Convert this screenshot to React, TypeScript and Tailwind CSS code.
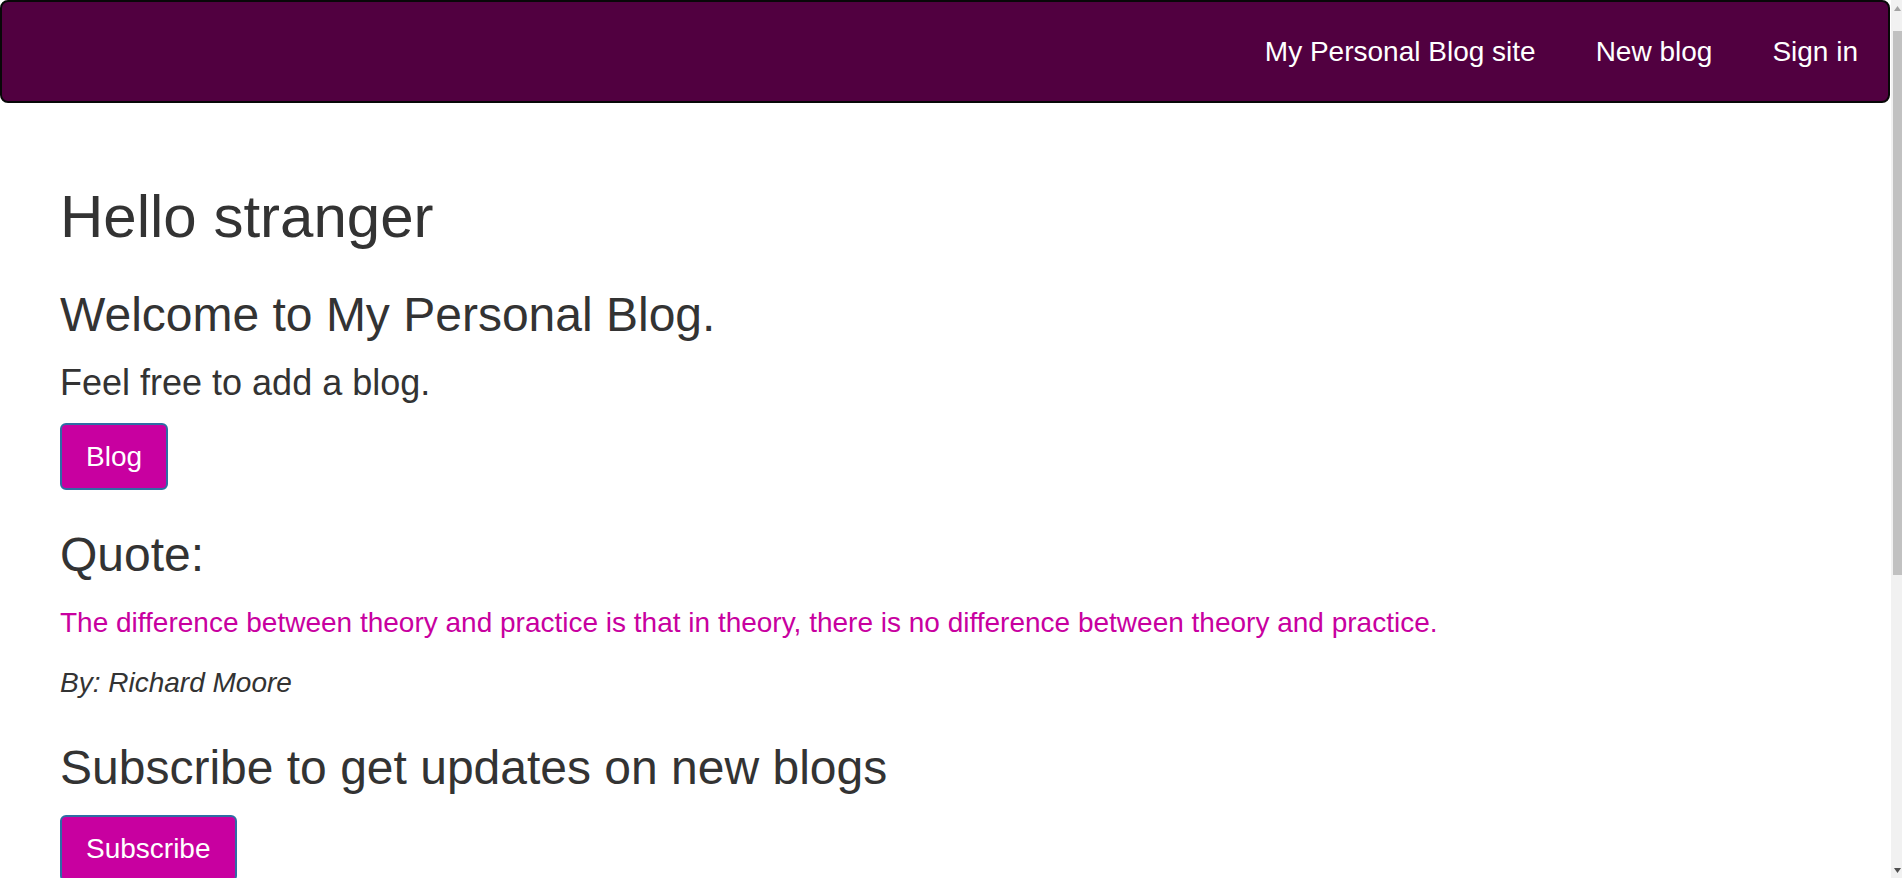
import React from 'react'

const navLinks = ['My Personal Blog site', 'New blog', 'Sign in']

// the window scrollbar, cut off at the right edge in the reference
const FakeScrollbar: React.FC = () => (
  <div className="fixed top-0 right-0 h-screen w-[11px] bg-[#f1f1f1] flex flex-col">
    <div className="h-[16px] flex items-center justify-end pr-[1px]">
      <svg width="7" height="5" viewBox="0 0 7 5">
        <path d="M3.5 0 L7 5 L0 5 Z" fill="#a3a3a3" />
      </svg>
    </div>
    <div className="flex-1 pt-[15px]">
      <div className="ml-[2px] h-[544px] bg-[#c1c1c1]" />
    </div>
    <div className="h-[16px] flex items-center justify-end pr-[1px]">
      <svg width="7" height="5" viewBox="0 0 7 5">
        <path d="M0 0 L7 0 L3.5 5 Z" fill="#505050" />
      </svg>
    </div>
  </div>
)

const App: React.FC = () => {
  return (
    <div className="min-h-screen bg-white pr-[12px] font-['Liberation_Sans',Arial,sans-serif] text-[#333333]">
      <nav className="flex justify-end border-2 border-[#080808] rounded-[8px] bg-[#510040]">
        <ul className="flex">
          {navLinks.map((link) => (
            <li key={link}>
              <a className="block px-[30px] pt-[30px] pb-[29px] text-[28px] leading-[40px] text-white cursor-pointer">
                {link}
              </a>
            </li>
          ))}
        </ul>
      </nav>

      <main className="pl-[60px] pb-[485px]">
        <h1 className="mt-[81px] text-[60px] leading-[66px] font-normal">Hello stranger</h1>
        <h2 className="mt-[38px] text-[48px] leading-[53px] font-normal">Welcome to My Personal Blog.</h2>
        <p className="mt-[16px] text-[36px] leading-[51px]">Feel free to add a blog.</p>
        <button
          type="button"
          className="mt-[15px] block bg-[#c800a0] border-2 border-[#2e6da4] rounded-[6px] px-[24px] py-[11.5px] text-[28px] leading-[40px] text-white"
        >
          Blog
        </button>

        <h2 className="mt-[38px] text-[48px] leading-[53px] font-normal">Quote:</h2>
        <p className="mt-[22px] text-[28px] leading-[40px] text-[#c800a0]">
          The difference between theory and practice is that in theory, there is no difference between theory and practice.
        </p>
        <p className="mt-[20px] text-[28px] leading-[40px] italic">By: Richard Moore</p>

        <h2 className="mt-[38px] text-[48px] leading-[53px] font-normal">Subscribe to get updates on new blogs</h2>
        <button
          type="button"
          className="mt-[21px] block bg-[#c800a0] border-2 border-[#2e6da4] rounded-[6px] px-[24px] py-[11.5px] text-[28px] leading-[40px] text-white"
        >
          Subscribe
        </button>
      </main>

      <FakeScrollbar />
    </div>
  )
}

export default App
